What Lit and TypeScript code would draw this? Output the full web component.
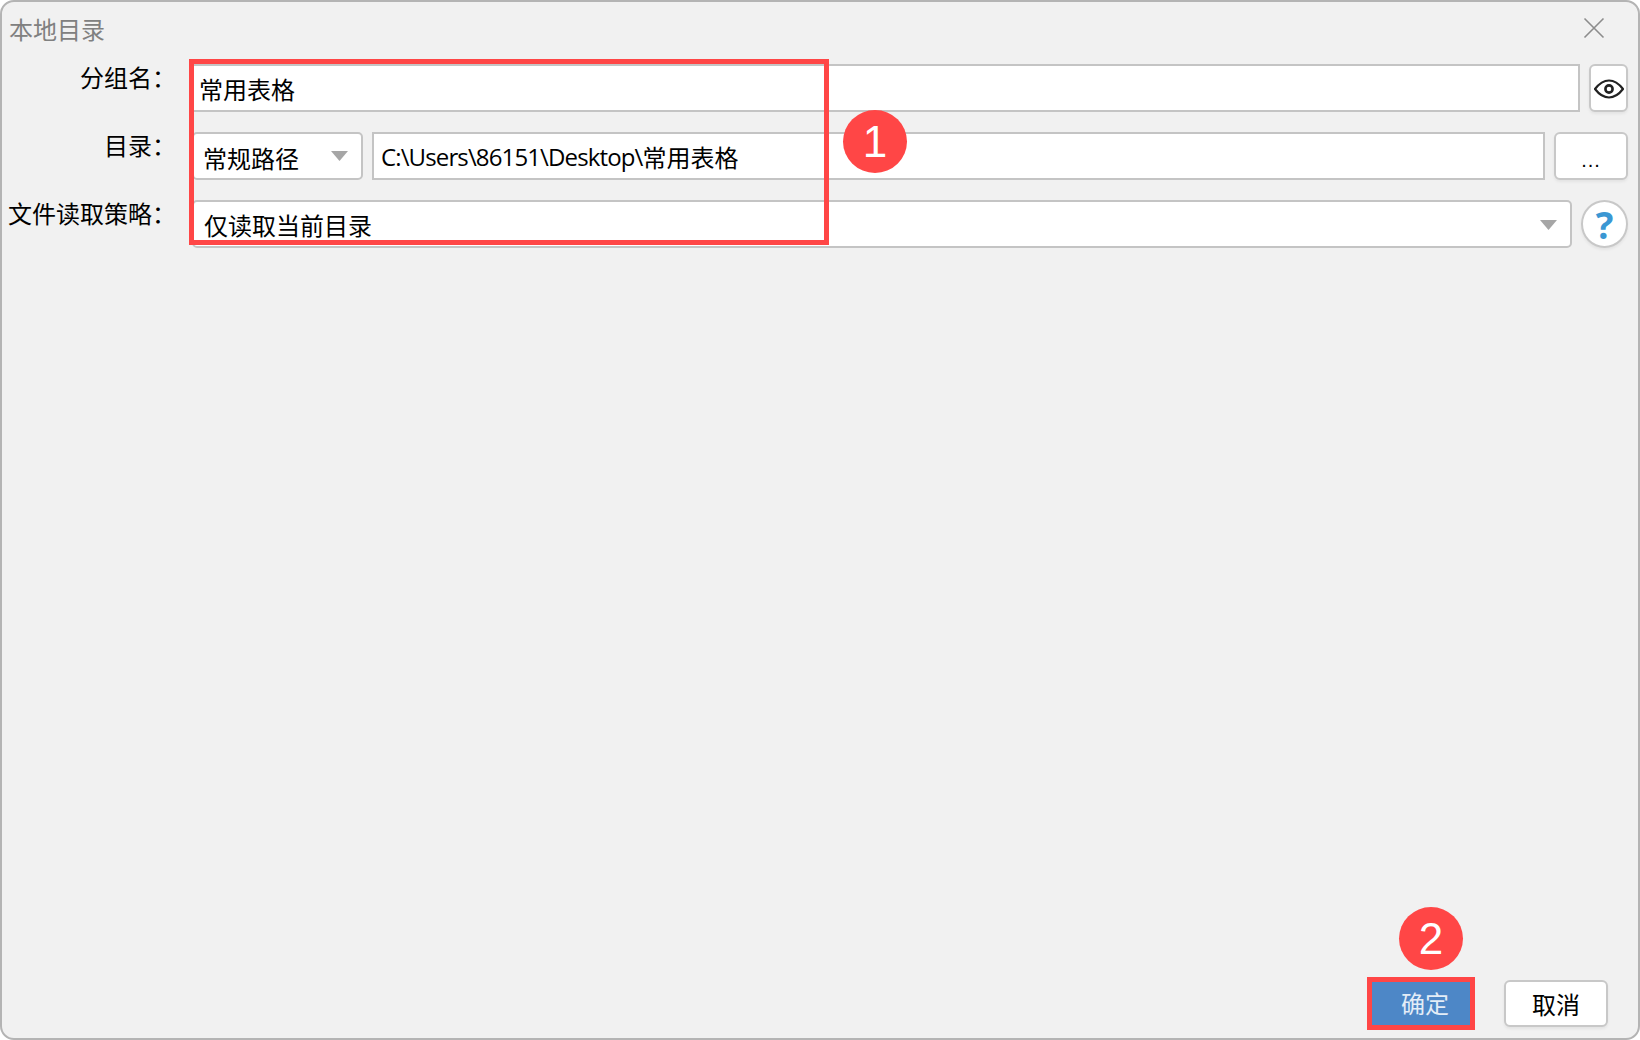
import { LitElement, html, css } from "lit";
import { customElement } from "lit/decorators.js";

@customElement("app-root")
export class AppRoot extends LitElement {
  static styles = css`
    :host {
      display: block;
      width: 1640px;
      height: 1040px;
      background: #fff;
      font-family: "Noto Sans CJK SC", "Liberation Sans", sans-serif;
      font-size: 24px;
      color: #000;
    }
    .window {
      position: relative;
      box-sizing: border-box;
      width: 1640px;
      height: 1040px;
      display: flex;
      flex-direction: column;
      background: #f1f1f1;
      border: 2px solid #b4b4b4;
      border-radius: 14px;
      overflow: hidden;
    }
    .titlebar {
      height: 62px;
      flex: none;
      display: flex;
      justify-content: space-between;
      padding: 10px 33px 0 7px;
      box-sizing: border-box;
    }
    .title { color: #808080; line-height: 34px; }
    .close { width: 22px; height: 22px; margin-top: 5px; }
    .form {
      display: grid;
      grid-template-columns: 174px 1fr;
      column-gap: 16px;
      row-gap: 20px;
      padding-right: 10px;
    }
    .label {
      text-align: right;
      line-height: 26px;
      height: 48px;
      white-space: nowrap;
    }
    .row { display: flex; height: 48px; gap: 9px; }
    .box {
      box-sizing: border-box;
      height: 48px;
      background: #fff;
      border: 2px solid #c4c4c4;
      display: flex;
      align-items: center;
      white-space: nowrap;
    }
    .grow { flex: 1; min-width: 0; }
    .name { padding: 1px 0 0 5px; }
    .select {
      border-radius: 5px;
      justify-content: space-between;
    }
    .type { width: 171px; flex: none; padding: 2px 13px 0 9px; }
    .type .arrow { margin-top: -2px; }
    .path { padding: 1px 0 0 7px; }
    .latin { font-family: "Open Sans", sans-serif; letter-spacing: -0.87px; }
    .policy { padding: 1px 13px 0 10px; line-height: 30px; }
    .arrow { width: 17px; height: 10px; flex: none; fill: #a6a6a6; }
    .btn {
      box-sizing: border-box;
      height: 48px;
      background: #fff;
      border: 2px solid #c8c8c8;
      border-radius: 6px;
      box-shadow: 0 2px 3px rgba(0, 0, 0, 0.06);
      display: flex;
      align-items: center;
      justify-content: center;
      flex: none;
    }
    .eye { width: 39px; }
    .eye svg { width: 30px; height: 20px; margin-top: 1px; }
    .more {
      width: 74px;
      align-items: flex-end;
      font-family: "Liberation Sans", sans-serif;
      font-size: 20px;
      line-height: 20px;
      padding-bottom: 8px;
      letter-spacing: 1px;
    }
    .help {
      width: 47px;
      border-radius: 50%;
      color: #3b97d3;
      font-family: "Open Sans", sans-serif;
      font-weight: 700;
      font-size: 37px;
      line-height: 1;
    }
    .spacer { flex: 1; }
    .footer {
      display: flex;
      justify-content: flex-end;
      align-items: flex-start;
      gap: 34px;
      padding: 0 30px 11px 0;
    }
    .primary {
      box-sizing: border-box;
      width: 98px;
      height: 44px;
      margin-top: 2px;
      padding: 0 0 3px 8px;
      background: #4d87c7;
      color: #e4edf7;
      display: flex;
      align-items: center;
      justify-content: center;
    }
    .cancel { width: 104px; height: 47px; }
    .mark {
      position: absolute;
      box-sizing: border-box;
      border: 5px solid #ff4646;
    }
    .mark-one { left: 187px; top: 57px; width: 640px; height: 186px; }
    .mark-two { left: 1365px; top: 975px; width: 108px; height: 53px; }
    .badge {
      position: absolute;
      width: 64px;
      height: 63px;
      border-radius: 50%;
      background: #ff4646;
      color: #fff;
      font-family: "Liberation Sans", sans-serif;
      font-size: 44px;
      line-height: 63px;
      text-align: center;
    }
    .badge-one { left: 841px; top: 108px; }
    .badge-two { left: 1397px; top: 905px; }
  `;

  render() {
    return html`
      <div class="window">
        <div class="titlebar">
          <span class="title">本地目录</span>
          <svg class="close" viewBox="0 0 22 22" fill="none" stroke="#8c8c8c" stroke-width="1.6">
            <path d="M1.5 1.5 L20.5 20.5 M20.5 1.5 L1.5 20.5" />
          </svg>
        </div>
        <div class="form">
          <div class="label">分组名：</div>
          <div class="row">
            <div class="box grow name">常用表格</div>
            <div class="btn eye">
              <svg viewBox="0 0 30 20" fill="none" stroke="#222" stroke-width="2.2">
                <path d="M1 10 C6 3.5 10 1.5 15 1.5 C20 1.5 24 3.5 29 10 C24 16.5 20 18.5 15 18.5 C10 18.5 6 16.5 1 10 Z" />
                <circle cx="15" cy="10" r="3.6" stroke-width="2.6" />
              </svg>
            </div>
          </div>
          <div class="label">目录：</div>
          <div class="row">
            <div class="box select type">
              <span>常规路径</span>
              <svg class="arrow" viewBox="0 0 17 10"><path d="M0 0 H17 L8.5 10 Z" /></svg>
            </div>
            <div class="box grow path"><span class="latin">C:\\Users\\86151\\Desktop\\</span>常用表格</div>
            <div class="btn more">...</div>
          </div>
          <div class="label">文件读取策略：</div>
          <div class="row">
            <div class="box select grow policy">
              <span>仅读取当前目录</span>
              <svg class="arrow" viewBox="0 0 17 10"><path d="M0 0 H17 L8.5 10 Z" /></svg>
            </div>
            <div class="btn help">?</div>
          </div>
        </div>
        <div class="spacer"></div>
        <div class="footer">
          <div class="primary">确定</div>
          <div class="btn cancel">取消</div>
        </div>
        <div class="mark mark-one"></div>
        <div class="mark mark-two"></div>
        <div class="badge badge-one">1</div>
        <div class="badge badge-two">2</div>
      </div>
    `;
  }
}
